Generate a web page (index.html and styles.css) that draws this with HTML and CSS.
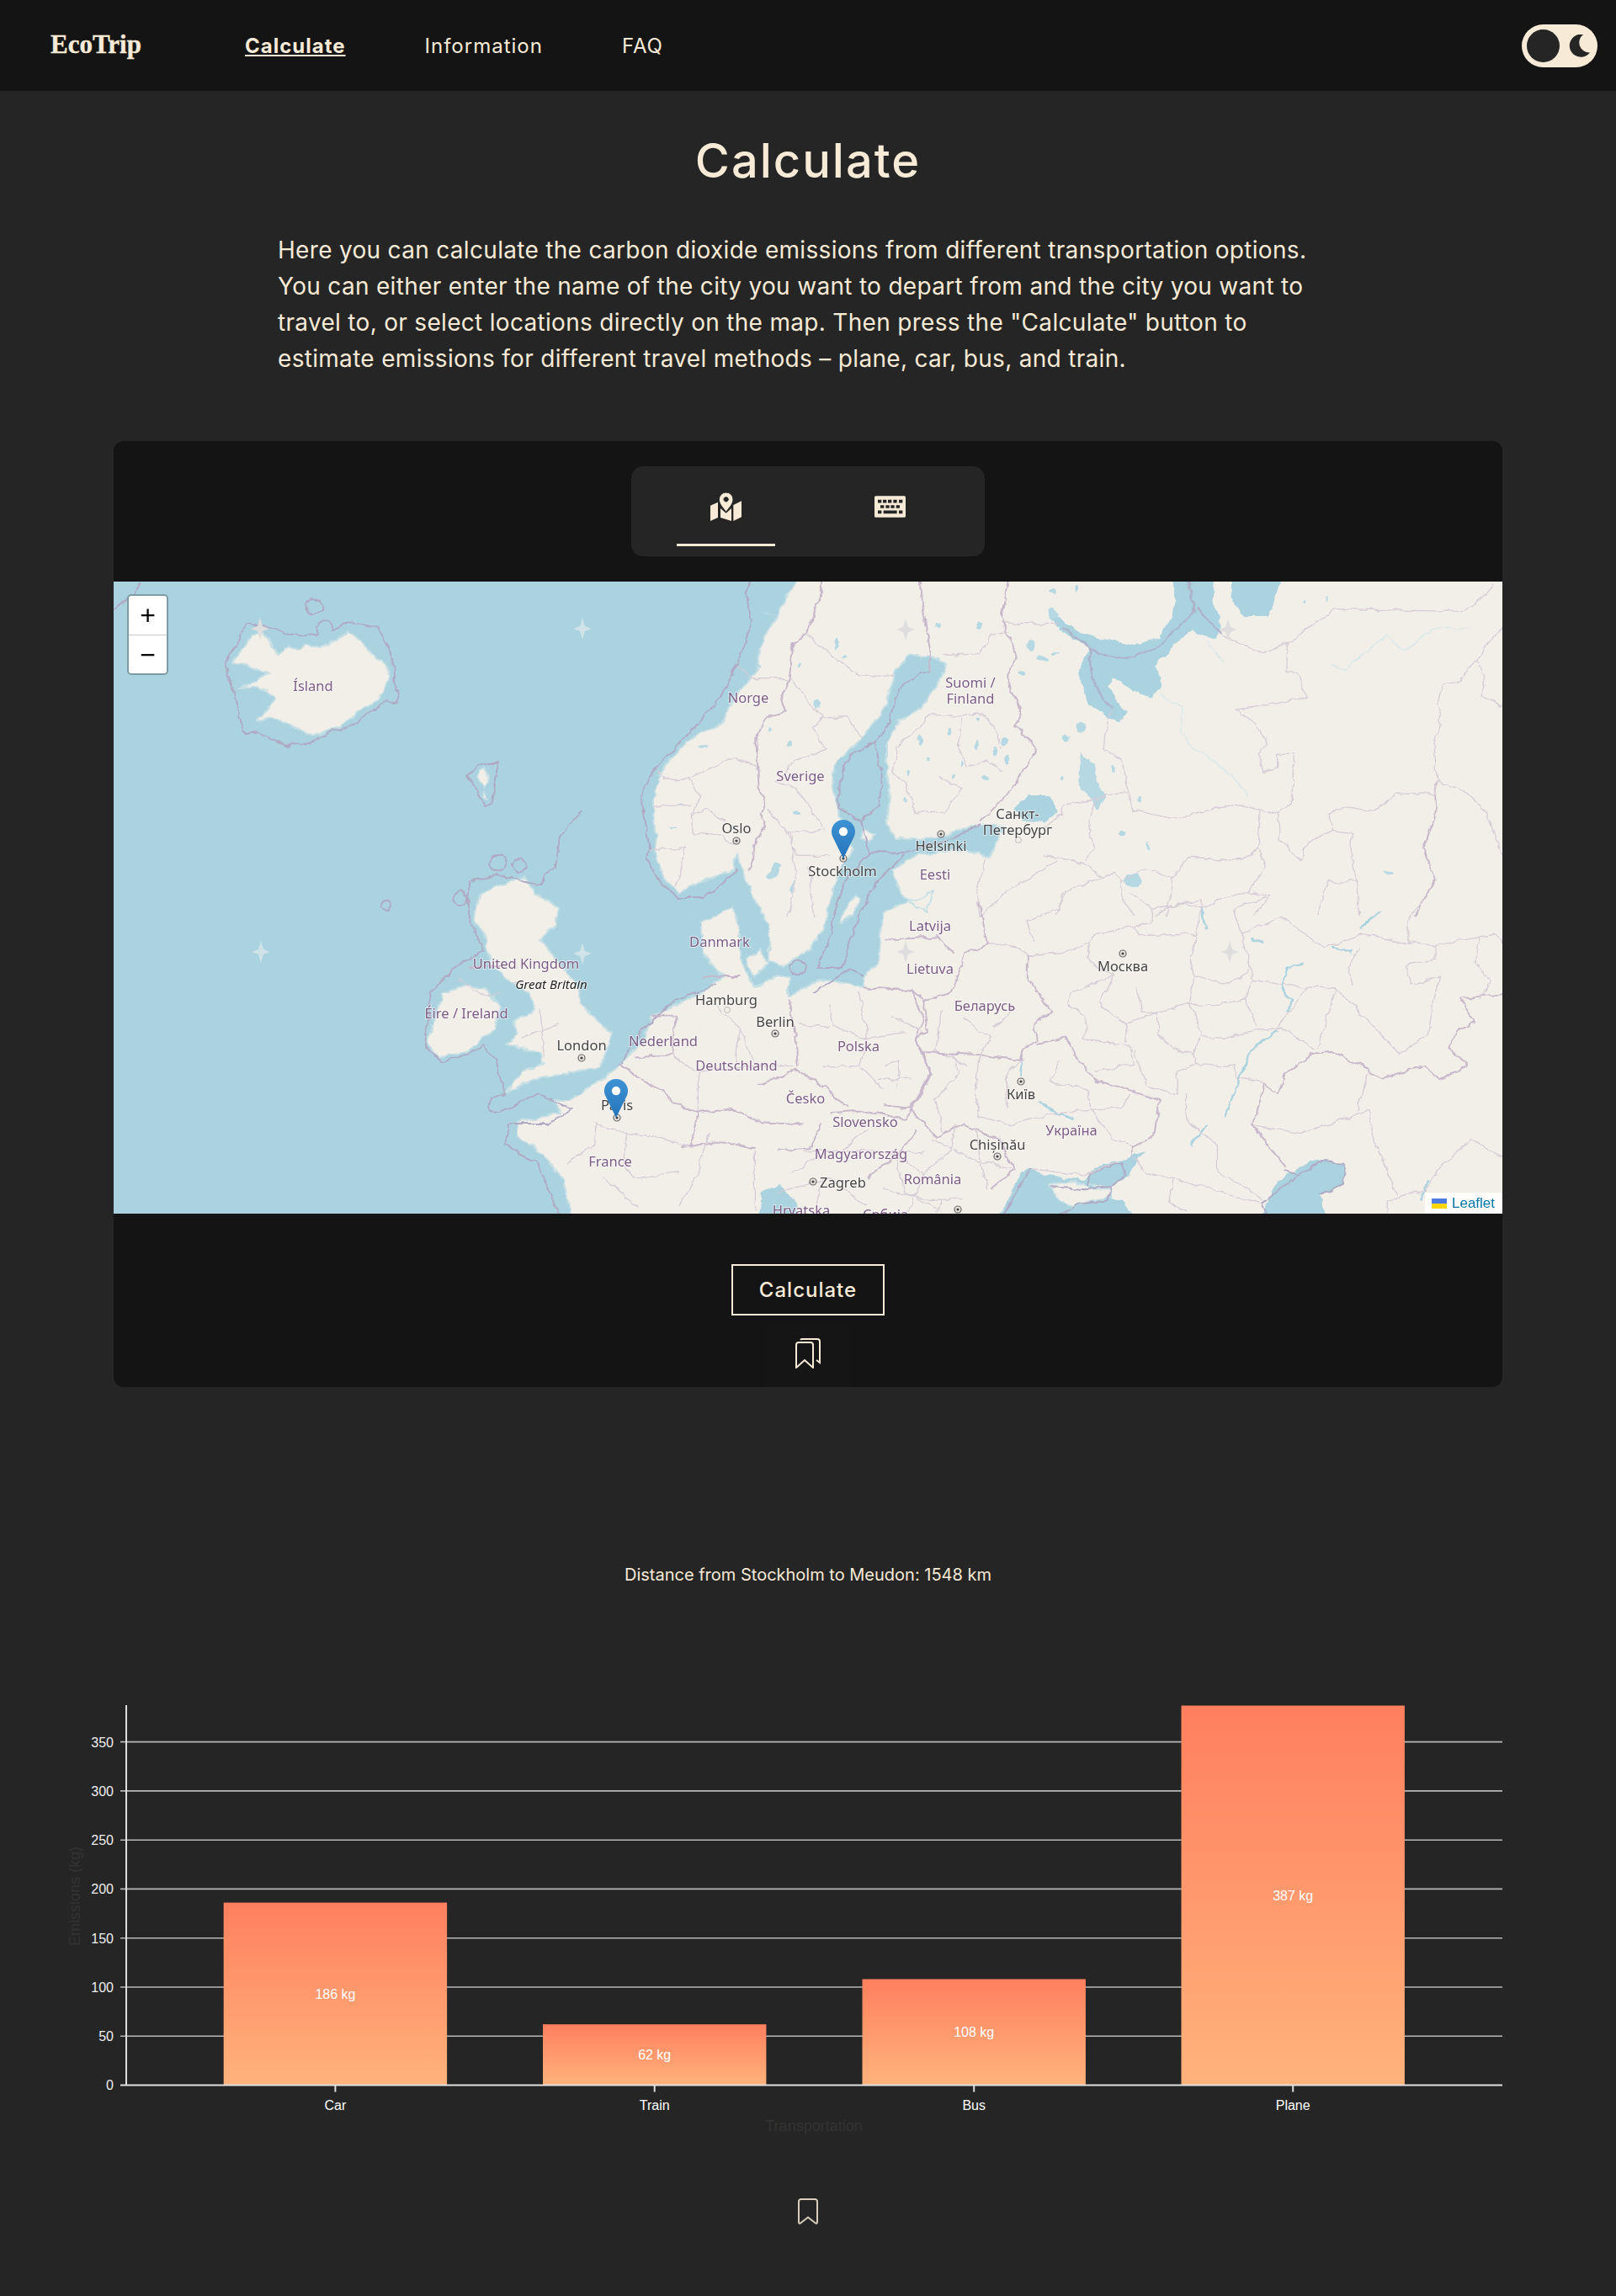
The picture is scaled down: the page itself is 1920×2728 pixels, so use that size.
FILE: index.html
```html
<!DOCTYPE html>
<html lang="en">
<head>
    <meta charset="UTF-8">
    <meta name="viewport" content="width=device-width, initial-scale=1.0">
    <title>EcoTrip - Calculate</title>
    <link rel="stylesheet" href="styles.css">
</head>
<body>
    <header class="topbar">
        <a href="#" class="logo">EcoTrip</a>
        <nav class="nav">
            <a href="#" class="nav-link active">Calculate</a>
            <a href="#" class="nav-link">Information</a>
            <a href="#" class="nav-link">FAQ</a>
        </nav>
        <div class="theme-toggle">
            <span class="theme-knob"></span>
            <svg class="theme-moon" viewBox="0 0 25 27"><path d="M17 0A13.5 13.5 0 1 0 25 21.5 12 12 0 0 1 17 0z"/></svg>
        </div>
    </header>

    <main>
        <h1 class="page-title">Calculate</h1>
        <p class="intro">Here you can calculate the carbon dioxide emissions from different transportation options.<br>You can either enter the name of the city you want to depart from and the city you want to<br>travel to, or select locations directly on the map. Then press the "Calculate" button to<br>estimate emissions for different travel methods – plane, car, bus, and train.</p>

        <section class="card">
            <div class="tabs">
                <button class="tab active">
                    <svg class="tab-icon map-icon" viewBox="0 0 111 102">
                        <path d="M0 47 27 35 27 90 0 102zM82 45 111 31 111 88 82 102zM36 57 56 74 75 57 75 102 36 90z"/>
                        <path fill-rule="evenodd" stroke="#252525" stroke-width="3" d="M56 70C46 56 31 42 31 25a25 25 0 0 1 50 0C81 42 66 56 56 70zM56 17a8 8 0 1 0 .01 0z"/>
                    </svg>
                </button>
                <button class="tab">
                    <svg class="tab-icon keyboard-icon" viewBox="0 0 111 77">
                        <path fill-rule="evenodd" d="M5 0H106a5 5 0 0 1 5 5V72a5 5 0 0 1-5 5H5a5 5 0 0 1-5-5V5a5 5 0 0 1 5-5zM12 14v11h13V14zM30 14v11h13V14zM48 14v11h13V14zM67 14v11h13V14zM87 14v11h13V14zM21 33v11h13V33zM40 33v11h13V33zM58 33v11h13V33zM77 33v11h13V33zM12 52v11h13V52zM32 52v11h48V52zM87 52v11h13V52z"/>
                    </svg>
                </button>
            </div>

            <div class="map">
                <svg class="map-canvas" viewBox="135 691 1650 751">
                    <defs>
                        <linearGradient id="pinFill" x1="0" y1="0" x2="0" y2="1">
                            <stop offset="0" stop-color="#3f93d3"/>
                            <stop offset="1" stop-color="#2473bb"/>
                        </linearGradient>
                        <linearGradient id="barFill" x1="0" y1="0" x2="0" y2="1">
                            <stop offset="0" stop-color="#ff7f5e"/>
                            <stop offset="1" stop-color="#ffb37c"/>
                        </linearGradient>
                        <!-- roughens the straight traced lines so they read like real coasts and borders -->
                        <filter id="wiggle" filterUnits="userSpaceOnUse" x="100" y="660" width="1720" height="820">
                            <feTurbulence type="fractalNoise" baseFrequency=".07" numOctaves="3" seed="4"/>
                            <feDisplacementMap in="SourceGraphic" scale="8" xChannelSelector="R" yChannelSelector="G"/>
                            <feGaussianBlur stdDeviation=".55"/>
                        </filter>
                        <symbol id="pin" viewBox="0 0 25 41">
                            <path fill="url(#pinFill)" d="M12.5 0C5.6 0 0 5.6 0 12.5c0 2.5.8 5 2 7L12.5 41 23 19.5c1.2-2 2-4.5 2-7C25 5.6 19.4 0 12.5 0z"/>
                            <circle cx="12.5" cy="12.5" r="4.6" fill="#fff"/>
                        </symbol>
                        <path id="star" d="M0-13 3-3 11 0 3 3 0 13-3 3-11 0-3-3z"/>
                    </defs>

                    <rect class="water" x="135" y="691" width="1650" height="751"/>

                    <!-- land -->
                    <g class="soft">
                        <path class="land" d="M950 670 946 691 929 720 914 747 904 770 898 800 871 830 857 860 832 870 807 890 786 917 777 940 777 967 780 990 777 1010 789 1043 807 1060 825 1053 850 1040 871 1033 876 1013 882 1037 895 1067 914 1100 914 1143 932 1147 963 1127 981 1097 990 1057 999 1030 1014 1010 1003 990 996 963 989 923 996 903 1021 880 1046 850 1057 823 1061 800 1079 780 1104 778 1125 790 1114 813 1096 840 1068 857 1054 880 1054 907 1057 950 1054 980 1064 997 1089 997 1118 993 1150 983 1171 980 1193 983 1175 1018 1143 1010 1093 1015 1061 1033 1068 1057 1088 1077 1102 1083 1109 1060 1050 1083 1048 1100 1044 1143 1026 1160 1026 1173 977 1163 937 1183 937 1160 923 1160 896 1173 879 1140 879 1100 870 1077 834 1097 834 1133 860 1160 834 1180 807 1193 776 1207 762 1240 745 1257 736 1267 700 1293 678 1307 660 1307 664 1323 615 1333 615 1350 646 1373 669 1400 678 1442 680 1465 1810 1465 1810 670z"/>
                        <path class="land" d="M624 1042 637 1063 664 1077 660 1100 642 1117 664 1143 687 1173 691 1193 709 1213 727 1227 718 1253 713 1267 664 1277 633 1283 602 1297 620 1273 646 1263 642 1250 602 1240 615 1227 611 1213 637 1200 629 1180 606 1167 584 1147 579 1130 575 1110 562 1090 571 1063 588 1053z"/>
                        <path class="land" d="M557 1170 579 1177 593 1197 588 1223 557 1247 521 1257 508 1240 521 1200 526 1180z"/>
                        <path class="land" d="M275 788 297 762 300 753 310 750 328 773 330 778 337 772 343 768 357 772 363 765 380 770 397 762 413 750 423 757 442 777 460 790 462 807 450 830 423 847 403 863 373 875 347 863 330 853 305 857 320 840 327 830 307 815 283 818 307 807 320 800 290 790z"/>
                        <path class="land" d="M570 915 577 912 580 925 574 935 568 925zM576 940 580 950 575 948z"/>
                        <path class="land" d="M1017 1063 1004 1080 999 1097 1013 1087 1024 1067zM887 1140 905 1128 912 1145 895 1162zM1024 985 1040 990 1034 1000 1022 996z"/>

                        <!-- seas -->
                        <path class="water" d="M1247 727 1286 753 1344 767 1376 757 1394 730 1397 710 1388 675 1445 675 1440 717 1451 730 1445 760 1435 757 1415 748 1372 790 1381 817 1369 828 1344 820 1324 805 1317 817 1329 835 1342 847 1329 858 1317 853 1294 837 1281 797 1294 770 1261 750 1247 733z"/>
                        <path class="water" d="M1469 675 1526 675 1508 733 1479 733 1461 710z"/>
                        <path class="water" d="M1175 1465 1201 1420 1213 1392 1225 1388 1243 1397 1272 1400 1288 1403 1300 1387 1333 1377 1361 1368 1352 1377 1343 1397 1319 1410 1288 1408 1319 1412 1319 1423 1333 1427 1365 1465z"/>
                        <path class="land" d="M1246 1408 1272 1403 1288 1408 1295 1413 1319 1412 1317 1422 1295 1427 1276 1435 1258 1425z"/>
                        <path class="water" d="M1490 1465 1517 1403 1560 1378 1597 1382 1595 1407 1569 1420 1580 1465z"/>
                        <path class="water" d="M900 1465 905 1415 925 1408 945 1425 955 1465z"/>
                        <path class="water" d="M1207 960 1222 945 1248 945 1258 965 1240 977 1214 974z"/>
                        <path class="water" d="M1284 905 1300 925 1310 950 1304 958 1292 945 1282 925z"/>

                        <!-- lakes, traced off the zoomed tiles -->
                        <g class="lakes" transform="translate(700 690) scale(.357 .333)">
                            <path d="M590 1055 620 1000 640 1010 630 1045 600 1065zM664 1105 685 1065 676 1115z"/>
                            <ellipse cx="665" cy="580" rx="7" ry="14"/><ellipse cx="690" cy="825" rx="10" ry="7"/>
                            <ellipse cx="820" cy="220" rx="6" ry="22"/><ellipse cx="850" cy="270" rx="8" ry="5"/><ellipse cx="1300" cy="160" rx="9" ry="14"/>
                            <ellipse cx="1160" cy="160" rx="5" ry="10"/><ellipse cx="1470" cy="230" rx="16" ry="22"/><ellipse cx="1510" cy="280" rx="16" ry="10"/>
                            <ellipse cx="1545" cy="120" rx="14" ry="20"/><ellipse cx="1290" cy="590" rx="6" ry="16"/><ellipse cx="1380" cy="570" rx="10" ry="16"/>
                            <ellipse cx="1100" cy="570" rx="6" ry="16"/><ellipse cx="1130" cy="640" rx="6" ry="10"/><ellipse cx="1210" cy="700" rx="5" ry="10"/>
                            <ellipse cx="1320" cy="700" rx="14" ry="10"/><ellipse cx="1200" cy="540" rx="5" ry="12"/><ellipse cx="1060" cy="690" rx="5" ry="10"/>
                            <ellipse cx="600" cy="530" rx="5" ry="8"/><ellipse cx="700" cy="300" rx="6" ry="10"/><ellipse cx="760" cy="440" rx="5" ry="16"/>
                            <ellipse cx="480" cy="880" rx="4" ry="10"/><ellipse cx="300" cy="800" rx="12" ry="3"/><ellipse cx="280" cy="880" rx="12" ry="3"/>
                            <ellipse cx="380" cy="590" rx="16" ry="4"/><ellipse cx="600" cy="120" rx="22" ry="4"/><ellipse cx="560" cy="300" rx="10" ry="5"/>
                            <ellipse cx="1390" cy="640" rx="8" ry="20"/><ellipse cx="1350" cy="610" rx="6" ry="14"/><ellipse cx="1240" cy="650" rx="5" ry="10"/>
                            <ellipse cx="1440" cy="330" rx="10" ry="7"/><ellipse cx="1290" cy="490" rx="5" ry="8"/><ellipse cx="1050" cy="780" rx="5" ry="8"/>
                        </g>
                        <g class="lakes" transform="translate(1240 690) scale(.357 .333)">
                            <path d="M120 615 170 650 180 720 205 770 180 820 160 790 115 730z"/>
                            <ellipse cx="75" cy="560" rx="14" ry="12"/><ellipse cx="125" cy="525" rx="14" ry="18"/>
                            <ellipse cx="265" cy="900" rx="14" ry="11"/><ellipse cx="295" cy="1070" rx="26" ry="26"/><ellipse cx="320" cy="780" rx="5" ry="12"/>
                            <ellipse cx="232" cy="670" rx="5" ry="12"/><ellipse cx="350" cy="950" rx="4" ry="18"/><ellipse cx="865" cy="78" rx="4" ry="6"/>
                            <ellipse cx="940" cy="68" rx="3" ry="10"/><ellipse cx="40" cy="260" rx="14" ry="5"/><ellipse cx="30" cy="40" rx="12" ry="8"/>
                            <ellipse cx="110" cy="30" rx="5" ry="12"/><ellipse cx="1150" cy="1040" rx="18" ry="5"/><ellipse cx="60" cy="700" rx="6" ry="9"/>
                        </g>
                        <g class="rivers" transform="translate(1050 1060) scale(.4719 .3333)">
                            <path d="M390 745 440 790 480 810M1060 250 1020 270 1000 330 1010 370 1030 380 1015 430M990 490 920 570 900 650 860 800M815 830 770 900M800 60 810 130M1200 130 1250 70M925 165 960 180M1130 195 1180 215M345 610 345 660M1370 1030 1350 1100"/>
                        </g>
                        <g class="rivers thin" transform="translate(1240 690) scale(.357 .333)">
                            <path d="M545 215 580 270 600 290M390 410 465 450 455 520 480 580 620 690 680 770M960 300 1000 320 1090 240 1140 195 1200 250 1300 170 1420 170"/>
                        </g>
                    </g>

                    <!-- sea borders -->
                    <g class="soft">
                        <path class="sea-line" d="M896 675 886 707 895 735 875 790 857 827 829 860 779 913 763 940 764 967 771 1003 768 1020 786 1050 807 1067 836 1067 868 1040 875 1033"/>
                        <path class="sea-line" d="M267 790 293 742 310 742 348 755 378 753 376 745A9 9 0 1 1 394 750L417 738 450 747 468 787 470 820A8 8 0 1 1 460 832L417 863 397 868 373 881 340 886 300 870 290 870z"/>
                        <path class="sea-line" d="M170 680 160 705 130 725M555 922 567 907 592 907 585 953 577 957z"/>
                        <path class="sea-line" d="M690 965 665 995 660 1030 640 1050 590 1040 557 1047 557 1090 575 1130 539 1150 512 1177 506 1243 526 1263 575 1243 590 1260 600 1300 585 1305A9 9 0 0 0 600 1320L640 1300 680 1318 650 1335 605 1335 600 1360 640 1385 672 1465"/>
                        <circle class="sea-line" cx="374" cy="721" r="9.5"/><circle class="sea-line" cx="591" cy="1026" r="10"/><circle class="sea-line" cx="617" cy="1028" r="8"/>
                        <circle class="sea-line" cx="547" cy="1068" r="9"/><circle class="sea-line" cx="459" cy="1076" r="6"/><circle class="sea-line" cx="948" cy="1150" r="9"/>
                        <path class="sea-line" d="M1038 882 1011 897 1000 917 996 960 1021 975 1046 957 1048 917 1038 882 1057 860 1064 830 1075 810 1104 797M1021 975 1034 1012 1075 1013 1121 1000 1164 980M1034 1012 1005 1045 989 1090 985 1120 970 1150 1000 1150 1020 1090 1040 1050 1075 1015M736 1267 762 1225 800 1190 850 1170M965 1180 1010 1150 1025 1160"/>
                        <g class="sea-line-group" transform="translate(1240 690) scale(.357 .333)">
                            <path d="M475 -40 500 110 430 190 370 245 295 275 190 265 155 240 60 165M510 100 590 190M155 240 155 320 180 400 228 455"/>
                        </g>
                        <g class="sea-line-group" transform="translate(1050 1060) scale(.4719 .3333)">
                            <path d="M370 985 340 1060 290 1170M500 1060 570 1050 610 1010 600 960 520 1000 510 1050M420 1050 510 1060M570 1050 560 1100 500 1110 420 1170M1010 990 1040 1010 950 1110 970 1170M1040 1010 1100 960 1160 965 1155 1040 1100 1080"/>
                        </g>
                    </g>

                    <!-- country and region borders -->
                    <g class="soft borders">
                        <g transform="translate(700 690) scale(.357 .333)">
                            <path class="major" d="M770 -40 770 60 720 190 680 220 665 350 640 410 655 470 585 490 555 560 565 740 590 780 570 830 585 880 550 940 545 1020 530 1030M1405 -40 1370 130 1420 260 1390 350 1440 470 1420 520 1490 600 1400 750 1300 860M1100 -40 1110 90 1135 250 1130 320"/>
                            <path class="minor" d="M725 195 900 340 1010 340M670 350 780 490 860 485 910 570M780 490 740 520 790 600 690 640 620 720 690 740 760 850 780 890M590 810 660 900 770 890M660 900 690 980 800 980M490 305 560 350 660 350M230 680 250 710 330 705 420 660 490 630 555 660M330 705 370 770 340 840 390 810 450 860M340 840 345 900 440 910 480 940M215 805 340 800M200 965 320 950 290 1090M1240 480 1130 480 1110 510 1030 590 1010 680 1050 720 1070 780 1090 830 1180 820M1240 480 1230 600 1260 660 1320 640 1380 680M1240 480 1300 470 1350 520 1370 600M1160 700 1240 740 1180 830M1180 270 1300 260 1340 190 1400 180M1370 150 1560 155M670 900 690 1060 660 1200M730 1020 750 1200M1320 980 1290 1120 1300 1200 1400 1100 1560 1000"/>
                        </g>
                        <g transform="translate(450 1000) scale(.4464 .3333)">
                            <path class="major" d="M640 790 700 850 760 890 770 920 850 970 830 1090M680 770 780 760 790 620 730 620M1090 560 1110 700 1115 800M860 480 960 480M1010 870 1110 810 1170 860 1250 950M850 970 940 950 1020 1000 1130 1010M810 1090 900 1070 1000 1090M1180 1000 1150 1090 1060 1100M1420 530 1450 640 1430 700 1470 830 1400 990M1200 970 1300 960 1400 990M1430 1030 1380 1120 1300 1200M1350 350 1490 340 1530 400M1290 520 1420 530M240 450 330 440"/>
                            <path class="minor" d="M570 1000 660 1040 730 1050 830 1090M580 1000 570 1090 510 1130 500 1150M660 1040 650 1150 680 1200 800 1180M430 600 440 770M210 490 280 550 330 540M350 500 430 510M880 570 960 660 1000 800 850 820 850 970M780 760 850 820M1000 800 1100 800M960 660 950 780M1200 580 1210 660 1300 700 1400 680M1280 540 1300 700 1280 800 1340 880M1120 650 1200 660M1180 800 1280 800M1420 840 1330 850M1100 1180 1200 1100 1300 1100 1450 1110M880 1040 850 1180 800 1300M1000 1100 1000 1320M1060 1250 1200 1200 1300 1300M1370 1100 1400 1250 1500 1320M1300 1030 1230 1100 1130 1100M1180 1210 1160 1320M1500 600 1480 740 1568 800M600 1200 690 1300M480 650 380 700"/>
                        </g>
                        <g transform="translate(1240 690) scale(.357 .333)">
                            <path class="major" d="M1310 715 1300 760 1305 840 1260 960 1305 1060 1240 1195"/>
                            <path class="minor" d="M225 460 205 540 200 600 260 640 275 730 300 820 440 850 560 810 640 800 720 820 780 830 830 790 830 620 775 620 775 670 730 680 715 620 740 585 710 510 640 460 770 440 880 415 845 330 810 330 810 225 730 260 590 195M810 225 930 130 965 100 1400 110 1480 40 1500 10M1525 165 1440 280 1380 360 1330 370 1310 430 1320 480 1300 600 1310 715 1300 760 1170 760 1100 825 1000 810 945 830 960 890 880 935 850 1000 785 920 780 830M1310 715 1400 750 1470 820 1525 980M1440 280 1470 340 1460 410 1525 450M720 820 715 950 740 1020 680 1110 600 1130 530 1170 450 1150 370 1195M715 955 660 1000 480 985 430 1060 340 1030 260 1070 240 1040 150 1080 70 1110 40 1195M0 980 130 1010 200 1060M170 780 65 800 60 830 0 880M170 790 150 850 165 950 135 1000M280 760 210 760 170 790M960 890 1030 900 1020 990 1040 1060 1050 1195M1040 1070 945 1075 910 1195M680 1110 750 1125 700 1195M260 1070 260 1130 300 1195M430 1060 410 1195"/>
                        </g>
                        <g transform="translate(1050 1060) scale(.4719 .3333)">
                            <path class="major" d="M1080 575 1130 570 1215 630 1250 660 1360 620 1400 670 1470 620 1420 550 1450 490 1490 465 1450 380 1590 355M1080 575 1010 650 995 720 960 680 930 830 1010 980M360 225 360 300 425 430 380 470 385 530 350 560 345 600M100 570 240 580 345 600M385 540 460 520 490 600 530 670 610 700 695 745 680 870 630 910 625 935M0 350 70 345 100 385 170 360 205 220 260 185 240 30M100 385 110 500 80 520 100 570 115 650 65 770 0 760M65 770 130 870 200 830 290 880 330 990 270 1060"/>
                            <path class="minor" d="M360 225 450 215 520 180 530 150 630 120 640 155 790 150 770 230 780 300 770 400 800 500 780 580 790 610 880 620 890 660 960 680M520 180 510 240 580 300 470 360 460 400 510 440 505 520 620 550 630 610 530 640M630 120 670 110 680 60 800 30 790 150M580 300 545 380 550 410 610 470 690 430 770 400M640 340 650 430 690 430 690 500 720 550 780 580M610 470 610 540M630 560 660 690 740 720 740 640 790 610M800 515 860 520 940 490 1000 480 1080 560M770 400 850 400 910 380 940 480M910 380 930 310 1060 340 1040 400 990 480M930 310 900 150 1000 90 1060 150 1110 200 1200 150 1320 180 1390 190 1390 240 1310 260 1330 330 1400 300 1370 500 1300 580M1060 340 1130 340 1180 400 1260 520 1300 580M1140 340 1090 560M1180 330 1170 270 1200 200M1320 180 1320 100 1360 30M1390 190 1500 160 1540 150 1555 180M1500 160 1490 250 1530 320 1500 380M900 150 880 60 960 20M680 60 620 0M780 300 870 330 920 280M360 225 330 190 260 185M360 100 380 180M360 100 440 60 450 0M240 580 230 720 240 800 320 830 420 790 500 780 600 770 620 720M350 600 310 640 310 770M440 600 420 680 510 700 520 770 580 880 630 910M170 580 190 640 130 740 150 850M760 720 760 780 770 830 840 900 840 1000 920 1060 950 1100M930 830 1050 860 1220 780 1240 900 1290 1080M1220 640 1190 780M1480 880 1400 980 1365 1060 1270 1100 1270 1145M1480 880 1568 950M370 985 500 1010 590 960M625 935 660 1000 730 1020 900 1090 950 1110M730 1020 720 1100 760 1145M20 440 100 500M200 450 270 520 240 580M330 410 280 480M40 600 30 700M0 620 40 600M180 830 170 920 100 1000 60 1145M230 840 260 1060M120 880 240 960 330 990M0 920 100 1000M0 1060 120 1100 200 1090M150 1100 130 1145"/>
                        </g>
                    </g>

                    <!-- stars -->
                    <use href="#star" class="star sea" x="692" y="747"/>
                    <use href="#star" class="star sea" x="310" y="1131"/>
                    <use href="#star" class="star sea" x="692" y="1133"/>
                    <use href="#star" class="star" x="1076" y="748"/>
                    <use href="#star" class="star" x="1459" y="748"/>
                    <use href="#star" class="star" x="1461" y="1131"/>
                    <use href="#star" class="star" x="1076" y="1131"/>
                    <use href="#star" class="star" x="309" y="747"/>

                    <!-- cities -->
                    <g class="city-dot"><circle cx="875" cy="999" r="4"/><circle cx="1002" cy="1020" r="4"/><circle cx="1118" cy="991" r="4"/><circle cx="691" cy="1257" r="4"/><circle cx="921" cy="1228" r="4"/><circle cx="733" cy="1328" r="4"/><circle cx="1334" cy="1133" r="4"/><circle cx="1213" cy="1285" r="4"/><circle cx="1185" cy="1374" r="4"/><circle cx="966" cy="1404" r="4"/><circle cx="1138" cy="1437" r="4"/></g>
                    <g class="city-core"><circle cx="875" cy="999" r="1.6"/><circle cx="1002" cy="1020" r="1.6"/><circle cx="1118" cy="991" r="1.6"/><circle cx="691" cy="1257" r="1.6"/><circle cx="921" cy="1228" r="1.6"/><circle cx="733" cy="1328" r="1.6"/><circle cx="1334" cy="1133" r="1.6"/><circle cx="1213" cy="1285" r="1.6"/><circle cx="1185" cy="1374" r="1.6"/><circle cx="966" cy="1404" r="1.6"/><circle cx="1138" cy="1437" r="1.6"/></g>
                    <circle class="town-dot" cx="864" cy="1200" r="3.5"/>
                    <circle class="town-dot" cx="1210" cy="998" r="3.5"/>

                    <!-- labels -->
                    <g class="country-labels">
                        <text x="372" y="821">Ísland</text>
                        <text x="889" y="835">Norge</text>
                        <text x="951" y="928">Sverige</text>
                        <text x="1153" y="817">Suomi /</text>
                        <text x="1153" y="836">Finland</text>
                        <text x="1111" y="1045">Eesti</text>
                        <text x="1105" y="1106">Latvija</text>
                        <text x="1105" y="1157">Lietuva</text>
                        <text x="855" y="1125">Danmark</text>
                        <text x="625" y="1151">United Kingdom</text>
                        <text x="554" y="1210">Éire / Ireland</text>
                        <text x="788" y="1243">Nederland</text>
                        <text x="1020" y="1249">Polska</text>
                        <text x="875" y="1272">Deutschland</text>
                        <text x="957" y="1311">Česko</text>
                        <text x="1028" y="1339">Slovensko</text>
                        <text x="1023" y="1377">Magyarország</text>
                        <text x="725" y="1386">France</text>
                        <text x="1108" y="1407">România</text>
                        <text x="952" y="1444">Hrvatska</text>
                        <text x="1052" y="1449">Србија</text>
                        <text x="1170" y="1201">Беларусь</text>
                        <text x="1273" y="1349">Україна</text>
                    </g>
                    <g class="city-labels">
                        <text x="875" y="990">Oslo</text>
                        <text x="1001" y="1041">Stockholm</text>
                        <text x="1118" y="1011">Helsinki</text>
                        <text x="1209" y="973">Санкт-</text>
                        <text x="1209" y="992">Петербург</text>
                        <text x="691" y="1248">London</text>
                        <text x="863" y="1194">Hamburg</text>
                        <text x="921" y="1220">Berlin</text>
                        <text x="733" y="1319">Paris</text>
                        <text x="1334" y="1154">Москва</text>
                        <text x="1213" y="1306">Київ</text>
                        <text x="1185" y="1366">Chișinău</text>
                        <text class="start" x="974" y="1411">Zagreb</text>
                        <text class="italic" x="655" y="1175">Great Britain</text>
                    </g>

                    <!-- markers -->
                    <use href="#pin" x="987" y="974" width="30" height="46"/>
                    <use href="#pin" x="717" y="1282" width="30" height="46"/>
                </svg>

                <div class="zoom-control">
                    <a href="#" class="zoom-btn">+</a>
                    <a href="#" class="zoom-btn">−</a>
                </div>
                <div class="attribution">
                    <svg class="flag" viewBox="0 0 18 12"><rect width="18" height="6" fill="#4c7be1"/><rect y="6" width="18" height="6" fill="#ffd500"/></svg>
                    <a href="#">Leaflet</a>
                </div>
            </div>

            <button class="calc-button">Calculate</button>
            <button class="save-button">
                <svg class="bookmarks-icon" viewBox="0 0 30 37">
                    <path d="M1 36V9a3 3 0 0 1 3-3h14a3 3 0 0 1 3 3v27L11 27z"/>
                    <path d="M6 3a2 2 0 0 1 2-1h18a3 3 0 0 1 3 3v25l-4-3"/>
                </svg>
            </button>
        </section>

        <p class="distance">Distance from Stockholm to Meudon: 1548 km</p>

        <svg class="chart" viewBox="0 2000 1920 560">
            <g class="grid">
                <path d="M143 2419.2H1785M143 2361H1785M143 2302.7H1785M143 2244.4H1785M143 2186.2H1785M143 2127.9H1785M143 2069.6H1785"/>
            </g>
            <rect class="bar" x="265.7" y="2260.6" width="265.4" height="216.9"/>
            <rect class="bar" x="645" y="2405.2" width="265.4" height="72.3"/>
            <rect class="bar" x="1024.5" y="2351.5" width="265.4" height="126"/>
            <rect class="bar" x="1403.5" y="2026.5" width="265.4" height="451"/>
            <path class="axis" d="M143 2477.5H1785M150 2026V2477.5M398.4 2477.5v8M777.7 2477.5v8M1157.2 2477.5v8M1536.2 2477.5v8"/>
            <g class="tick-y">
                <text x="135" y="2483">0</text><text x="135" y="2425">50</text><text x="135" y="2367">100</text>
                <text x="135" y="2309">150</text><text x="135" y="2250">200</text><text x="135" y="2192">250</text>
                <text x="135" y="2134">300</text><text x="135" y="2076">350</text>
            </g>
            <g class="tick-x">
                <text x="398.4" y="2507">Car</text><text x="777.7" y="2507">Train</text>
                <text x="1157.2" y="2507">Bus</text><text x="1536.2" y="2507">Plane</text>
            </g>
            <g class="bar-label">
                <text x="398.4" y="2375">186 kg</text><text x="777.7" y="2447">62 kg</text>
                <text x="1157.2" y="2420">108 kg</text><text x="1536.2" y="2258">387 kg</text>
            </g>
            <text class="axis-title" transform="translate(95 2253) rotate(-90)">Emissions (kg)</text>
            <text class="axis-title" x="967" y="2532">Transportation</text>
        </svg>

        <button class="save-button chart-save">
            <svg class="bookmark-icon" viewBox="0 0 24 32">
                <path d="M1 28V4a3 3 0 0 1 3-3h16a3 3 0 0 1 3 3v24c0 2-1 2-2 1.500L12 22.500 3 29.500C2 30 1 30 1 28z"/>
            </svg>
        </button>
    </main>
</body>
</html>
```

FILE: styles.css
```css
* {
    margin: 0;
    padding: 0;
    box-sizing: border-box;
}

body {
    background: #252525;
    color: #f7ead7;
    font-family: Inter, 'Noto Sans', sans-serif;
}

/* header */
.topbar {
    height: 108px;
    background: #141414;
    display: flex;
    align-items: center;
    padding: 0 22px 0 60px;
}

.logo {
    font-family: 'Liberation Serif', serif;
    font-weight: 700;
    font-size: 31px;
    color: #f7ead7;
    -webkit-text-stroke: 0.4px #f7ead7;
    text-decoration: none;
    width: 231px;
    margin-top: -2px;
}

.nav {
    display: flex;
    gap: 94px;
    flex: 1;
}

.nav-link {
    color: #f7ead7;
    font-size: 24px;
    letter-spacing: 1px;
    text-decoration: none;
}

.nav-link.active {
    font-weight: 700;
    text-decoration: underline;
}

.theme-toggle {
    width: 90px;
    height: 51px;
    background: #f7ead7;
    border-radius: 26px;
    display: flex;
    align-items: center;
    padding: 0 9px 0 6px;
    justify-content: space-between;
}

.theme-knob {
    width: 39px;
    height: 39px;
    border-radius: 50%;
    background: #252525;
}

.theme-moon {
    width: 25px;
    height: 27px;
    fill: #252525;
}

/* intro */
.page-title {
    font-size: 56px;
    font-weight: 500;
    letter-spacing: 2px;
    line-height: 64px;
    text-align: center;
    margin-top: 51px;
}

.intro {
    font-size: 28px;
    letter-spacing: 0.31px;
    line-height: 43px;
    margin: 53px 0 76px 330px;
}

/* card */
.card {
    margin: 0 135px;
    height: 1124px;
    background: #141414;
    border-radius: 12px;
    padding-top: 30px;
    display: flex;
    flex-direction: column;
    align-items: center;
}

.tabs {
    width: 420px;
    height: 107px;
    background: #252525;
    border-radius: 14px;
    display: flex;
    justify-content: center;
    gap: 78px;
    margin-bottom: 30px;
}

.tab {
    width: 117px;
    height: 95px;
    padding-top: 3px;
    background: none;
    border: none;
    border-bottom: 3px solid transparent;
    display: flex;
    align-items: center;
    justify-content: center;
}

.tab.active {
    border-bottom-color: #f7ead7;
}

.tab-icon {
    fill: #f7ead7;
    width: 37px;
}

.map-icon {
    height: 34px;
}

.keyboard-icon {
    height: 26px;
}

.map {
    position: relative;
    width: 100%;
    height: 751px;
    background: #aad3df;
    overflow: hidden;
}

.map-canvas {
    display: block;
    width: 100%;
    height: 100%;
}

.water {
    fill: #aad3df;
}

.land {
    fill: #f2efe9;
    stroke: #c8e0e5;
    stroke-width: 2;
    stroke-linejoin: round;
}

.soft {
    filter: url(#wiggle);
}

.lakes {
    fill: #b5d8e2;
}

.rivers path {
    fill: none;
    stroke: #aad3df;
    stroke-width: 2.5;
    vector-effect: non-scaling-stroke;
}

.rivers.thin path {
    stroke: #d6e8ea;
    stroke-width: 1.2;
}

.sea-line,
.sea-line-group path {
    fill: none;
    stroke: #b0a9c3;
    stroke-width: 1.8;
    stroke-linejoin: round;
    vector-effect: non-scaling-stroke;
}

.borders path {
    fill: none;
    stroke-linejoin: round;
    vector-effect: non-scaling-stroke;
}

.borders .major {
    stroke: #c8b6ca;
    stroke-width: 1.9;
}

.borders .minor {
    stroke: #d6cbd6;
    stroke-width: 1.3;
}

.star {
    fill: #dedede;
}

.star.sea {
    fill: #cfe3e8;
}

.city-dot circle {
    fill: #e8e5df;
    stroke: #666;
    stroke-width: 1.2;
}

.city-core circle {
    fill: #444;
}

.town-dot {
    fill: #f2efe9;
    stroke: #bbb;
}

.country-labels text,
.city-labels text {
    font-family: 'Noto Sans', sans-serif;
    font-size: 16.5px;
    text-anchor: middle;
    paint-order: stroke;
    stroke: rgba(255, 255, 255, 0.55);
    stroke-width: 2px;
}

.country-labels text {
    fill: #7c5b84;
}

.city-labels text {
    fill: #444;
}

.city-labels .start {
    text-anchor: start;
}

.city-labels .italic {
    font-style: italic;
    font-size: 15px;
    fill: #222;
}

.zoom-control {
    position: absolute;
    top: 15px;
    left: 16px;
    width: 49px;
    border: 2px solid #7e9ca6;
    border-radius: 5px;
    background: #fff;
    overflow: hidden;
}

.zoom-btn {
    display: block;
    height: 46px;
    line-height: 47px;
    text-align: center;
    color: #000;
    font-family: 'Liberation Sans', sans-serif;
    font-size: 32px;
    text-decoration: none;
}

.zoom-btn + .zoom-btn {
    border-top: 1px solid #ccc;
}

.attribution {
    position: absolute;
    right: 0;
    bottom: 0;
    width: 92px;
    height: 25px;
    background: rgba(255, 255, 255, 0.8);
    display: flex;
    align-items: center;
    gap: 6px;
    padding-left: 8px;
    font-family: 'Liberation Sans', sans-serif;
    font-size: 17px;
}

.attribution a {
    color: #0078a8;
    text-decoration: none;
}

.flag {
    width: 18px;
    height: 12px;
}

.calc-button {
    width: 182px;
    height: 61px;
    margin-top: 60px;
    background: #141414;
    border: 2px solid #f7ead7;
    color: #f7ead7;
    font-family: inherit;
    font-size: 24px;
    font-weight: 500;
    letter-spacing: 1px;
}

.save-button {
    background: none;
    border: none;
    display: block;
}

.card .save-button {
    width: 102px;
    height: 71px;
    margin-top: 14px;
    padding-top: 12px;
    background: #151515;
    display: flex;
    align-items: flex-start;
    justify-content: center;
}

.bookmarks-icon {
    display: block;
    width: 30px;
    height: 37px;
    fill: none;
    stroke: #f7ead7;
    stroke-width: 2;
}

/* results */
.distance {
    font-size: 20px;
    line-height: 30px;
    text-align: center;
    margin-top: 208px;
}

.chart {
    display: block;
    width: 1920px;
    height: 560px;
    margin-top: 114px;
    font-family: 'Liberation Sans', sans-serif;
}

.grid path {
    stroke: #b8b8b8;
    stroke-width: 1.6;
    fill: none;
}

.bar {
    fill: url(#barFill);
}

.axis {
    stroke: #e0e0e0;
    stroke-width: 2;
    fill: none;
}

.tick-y text {
    fill: #eee;
    font-size: 16px;
    text-anchor: end;
}

.tick-x text,
.bar-label text {
    fill: #fff;
    font-size: 16px;
    text-anchor: middle;
}

.axis-title {
    fill: #333;
    font-size: 18px;
    text-anchor: middle;
}

.chart-save {
    margin: 52px auto 85px;
    width: 24px;
    height: 32px;
}

.bookmark-icon {
    display: block;
    width: 24px;
    height: 32px;
    fill: none;
    stroke: #d9cebc;
    stroke-width: 2;
}
```
